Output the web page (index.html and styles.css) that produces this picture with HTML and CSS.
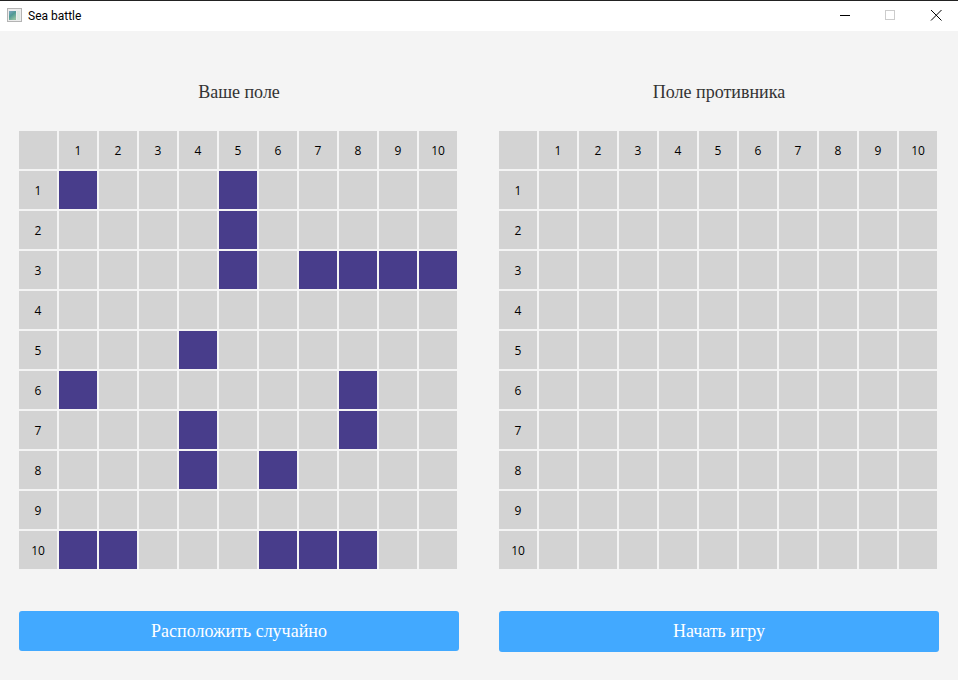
FILE: index.html
```html
<!DOCTYPE html>
<html lang="ru">
<head>
    <meta charset="UTF-8">
    <title>Sea battle</title>
    <link rel="stylesheet" href="styles.css">
</head>
<body>
    <div class="titlebar">
        <svg class="app-icon" width="15" height="14" viewBox="0 0 15 14">
            <defs>
                <linearGradient id="iconFill" x1="0" y1="0" x2="0.6" y2="1">
                    <stop offset="0" stop-color="#7fa6c4"/>
                    <stop offset="0.5" stop-color="#4f9a94"/>
                    <stop offset="1" stop-color="#8fc0a0"/>
                </linearGradient>
            </defs>
            <rect x="0.5" y="0.5" width="14" height="13" fill="#ececec" stroke="#b4b4b4"/>
            <rect x="2" y="3" width="7" height="9" fill="url(#iconFill)"/>
            <rect x="10" y="3" width="3" height="9" fill="#dbe8e0"/>
        </svg>
        <span class="app-title">Sea battle</span>
        <div class="win-buttons">
            <svg width="46" height="30" viewBox="0 0 46 30"><path d="M20 14.500h10" stroke="#000"/></svg>
            <svg width="46" height="30" viewBox="0 0 46 30"><rect x="19.500" y="9.500" width="9" height="9" fill="none" stroke="#ccc"/></svg>
            <svg width="46" height="30" viewBox="0 0 46 30"><path d="M19 9l10.500 10.500M29.500 9L19 19.500" stroke="#000"/></svg>
        </div>
    </div>

    <div class="boards">
        <div class="board">
            <h2>Ваше поле</h2>
            <div class="grid" id="myGrid"></div>
            <button>Расположить случайно</button>
        </div>
        <div class="board">
            <h2>Поле противника</h2>
            <div class="grid" id="enemyGrid"></div>
            <button class="btn-start">Начать игру</button>
        </div>
    </div>

    <script src="grid.js"></script>
</body>
</html>
```

FILE: styles.css
```css
body {
    margin: 0;
    height: 680px;
    overflow: hidden;
    background-color: #f4f4f4;
    font-family: "Liberation Serif", serif;
}
.titlebar {
    display: flex;
    align-items: center;
    height: 30px;
    background-color: #fff;
    border-top: 1px solid #222;
    font-family: Roboto, sans-serif;
    font-size: 12px;
    color: #000;
}
.app-icon {
    margin-left: 7px;
    margin-right: 6px;
    margin-bottom: 2px;
}
.app-title {
    margin-bottom: 1px;
}
.win-buttons {
    display: flex;
    margin-left: auto;
}
.boards {
    display: flex;
    gap: 40px;
    padding-left: 19px;
}
.board {
    width: 440px;
}
h2 {
    margin: 51px 0 29px 0;
    height: 20px;
    line-height: 20px;
    font-size: 18px;
    font-weight: normal;
    text-align: center;
    color: #333;
}
.grid {
    display: grid;
    grid-template-columns: repeat(11, 38px);
    grid-auto-rows: 38px;
    gap: 2px;
}
.cell {
    display: flex;
    align-items: center;
    justify-content: center;
    background-color: #d3d3d3;
    font-family: "Open Sans", sans-serif;
    font-size: 12px;
    color: #000;
}
.ship {
    background-color: #483d8b;
}
button {
    display: block;
    width: 440px;
    height: 40px;
    margin-top: 42px;
    background-color: #42a9ff;
    color: #fff;
    border: none;
    border-radius: 3px;
    font-family: "Liberation Serif", serif;
    font-size: 18px;
}
.btn-start {
    height: 41px;
}
```

FILE: grid.js
```js
// ship cells as row:column
var myShips = [
    "1:1", "1:5", "2:5", "3:5", "3:7", "3:8", "3:9", "3:10",
    "5:4", "6:1", "6:8", "7:4", "7:8", "8:4", "8:6",
    "10:1", "10:2", "10:6", "10:7", "10:8"
];

function drawGrid(id, ships) {
    var grid = document.getElementById(id);

    for (var row = 0; row <= 10; row++) {
        for (var col = 0; col <= 10; col++) {
            var cell = document.createElement("div");
            cell.className = "cell";

            if (row === 0 && col > 0) {
                cell.textContent = col;
            } else if (col === 0 && row > 0) {
                cell.textContent = row;
            } else if (ships.indexOf(row + ":" + col) !== -1) {
                cell.className = "cell ship";
            }

            grid.appendChild(cell);
        }
    }
}

drawGrid("myGrid", myShips);
drawGrid("enemyGrid", []);
```
